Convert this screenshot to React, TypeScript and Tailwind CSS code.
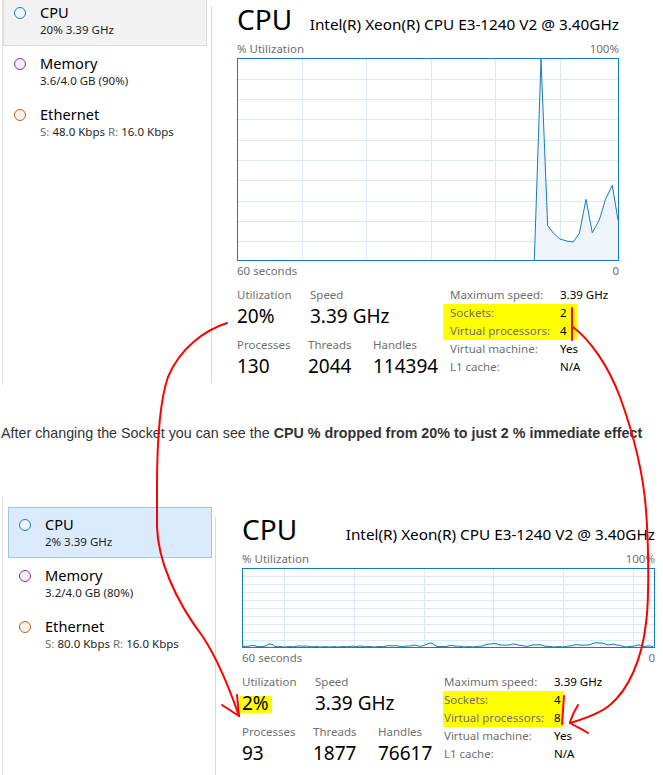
import React from "react";

const SANS = "font-['Noto_Sans',sans-serif]";

type NavProps = { title: string; sub: React.ReactNode; circle: string; boxClass?: string };

function NavItem({ title, sub, circle, boxClass = "" }: NavProps) {
  return (
    <div className={`h-[51px] flex ${boxClass}`}>
      <div className="pl-[11px] pr-[14px] pt-[12px]">
        <div className={`w-[12px] h-[12px] rounded-full border-[1.5px] ${circle}`} />
      </div>
      <div className="pt-[7px]">
        <div className="text-[14.6px] leading-[20px] text-black">{title}</div>
        <div className="text-[11.5px] leading-[16px] text-[#1f1f1f] whitespace-nowrap">{sub}</div>
      </div>
    </div>
  );
}

function Gray({ children }: { children: React.ReactNode }) {
  return <span className="text-[#707070]">{children}</span>;
}

function InfoRow({ label, value }: { label: string; value: string }) {
  return (
    <div className="flex text-[11.5px] leading-[18px] whitespace-nowrap">
      <div className="w-[110px] text-[#707070]">{label}</div>
      <div className="text-black">{value}</div>
    </div>
  );
}

function Stat({ label, value, className = "" }: { label: string; value: React.ReactNode; className?: string }) {
  return (
    <div className={className}>
      <div className="text-[11.5px] leading-[16px] text-[#707070]">{label}</div>
      <div className="text-[19px] leading-[26px] text-black whitespace-nowrap">{value}</div>
    </div>
  );
}

function TopGraph() {
  const W = 382;
  const H = 203;
  const vx = [65, 129, 194, 258, 323];
  const hy = [21, 41, 61, 82, 102, 122, 143, 163, 183];
  const pts: [number, number][] = [
    [297.3, 203], [304, 1], [310.7, 167.7], [316.3, 175], [323, 181], [329.7, 183],
    [336.3, 184], [342.3, 175.3], [349, 141.3], [355.3, 174.7], [362.3, 162],
    [368.7, 140.7], [375.3, 127.3], [381, 162],
  ];
  const line = pts.map((p) => p.join(",")).join(" ");
  const poly = line + ` ${W},${H} 297.3,${H}`;
  return (
    <svg width={W} height={H} className="block">
      <rect x={0} y={0} width={W} height={H} fill="#ffffff" />
      {vx.map((x) => (
        <line key={"v" + x} x1={x + 0.5} y1={0} x2={x + 0.5} y2={H} stroke="#d9eaf4" strokeWidth={1} />
      ))}
      {hy.map((y) => (
        <line key={"h" + y} x1={0} y1={y + 0.5} x2={W} y2={y + 0.5} stroke="#d9eaf4" strokeWidth={1} />
      ))}
      <polygon points={poly} fill="#eef4f9" />
      <polyline points={line} fill="none" stroke="#1a7cbd" strokeWidth={1} />
      <rect x={0.5} y={0.5} width={W - 1} height={H - 1} fill="none" stroke="#117dbb" strokeWidth={1} />
    </svg>
  );
}

function BottomGraph() {
  const W = 413;
  const H = 80;
  const vx = [42, 112, 182, 251, 321, 391];
  const hy = [8, 16, 24, 32, 40, 48, 56, 64, 72];
  const bumps: [number, number, number][] = [
    [10, 1.2, 6], [28, 3, 4], [60, 0.8, 8], [115, 0.6, 10], [150, 1.2, 8], [172, 1.5, 7],
    [188, 4, 5], [210, 1.2, 7], [251, 3.2, 10], [272, 2.6, 8], [295, 2.2, 8],
    [335, 2, 8], [356, 4.2, 10], [373, 2.2, 6], [396, 1.8, 5], [408, 0.8, 4],
  ];
  const pts: string[] = [];
  for (let x = 0; x <= W; x += 3) {
    let y = 78.8;
    for (const [c, h, w] of bumps) {
      y -= h * Math.exp(-(((x - c) / w) ** 2));
    }
    y -= 0.3 * Math.sin(x * 0.7);
    pts.push(`${x},${y.toFixed(2)}`);
  }
  const line = pts.join(" ");
  const poly = `0,${H} ` + line + ` ${W},${H}`;
  return (
    <svg width={W} height={H} className="block">
      <rect x={0} y={0} width={W} height={H} fill="#ffffff" />
      {vx.map((x) => (
        <line key={"v" + x} x1={x + 0.5} y1={0} x2={x + 0.5} y2={H} stroke="#d9eaf4" strokeWidth={1} />
      ))}
      {hy.map((y) => (
        <line key={"h" + y} x1={0} y1={y + 0.5} x2={W} y2={y + 0.5} stroke="#d9eaf4" strokeWidth={1} />
      ))}
      <polygon points={poly} fill="#eef4f9" />
      <polyline points={line} fill="none" stroke="#1a7cbd" strokeWidth={1} />
      <rect x={0.5} y={0.5} width={W - 1} height={H - 1} fill="none" stroke="#117dbb" strokeWidth={1} />
    </svg>
  );
}

type PanelProps = {
  widthClass: string;
  padClass: string;
  leftGroupClass: string;
  hlClass: string;
  graph: React.ReactNode;
  util: React.ReactNode;
  procs: string;
  threads: string;
  handles: string;
  sockets: string;
  vps: string;
};

function MainPanel(p: PanelProps) {
  return (
    <div className={`${p.widthClass} ${p.padClass}`}>
      <div className="flex justify-between items-baseline">
        <div className="text-[28px] leading-[34px] text-black">CPU</div>
        <div className="text-[15.3px] leading-[20px] text-black whitespace-nowrap">
          Intel(R) Xeon(R) CPU E3-1240 V2 @ 3.40GHz
        </div>
      </div>
      <div className="mt-[5px] flex justify-between text-[11.5px] leading-[16px] text-[#707070]">
        <span>% Utilization</span>
        <span>100%</span>
      </div>
      <div className="mt-[1px]">{p.graph}</div>
      <div className="mt-[2px] flex justify-between text-[11.5px] leading-[16px] text-[#707070]">
        <span>60 seconds</span>
        <span>0</span>
      </div>
      <div className="mt-[8px] flex">
        <div className={p.leftGroupClass}>
          <div className="flex">
            <Stat className="w-[73px]" label="Utilization" value={p.util} />
            <Stat label="Speed" value="3.39 GHz" />
          </div>
          <div className="flex mt-[8px]">
            <Stat className="w-[71px]" label="Processes" value={p.procs} />
            <Stat className="w-[65px]" label="Threads" value={p.threads} />
            <Stat label="Handles" value={p.handles} />
          </div>
        </div>
        <div className="-mt-[1px]">
          <InfoRow label="Maximum speed:" value="3.39 GHz" />
          <div className={p.hlClass}>
            <InfoRow label="Sockets:" value={p.sockets} />
            <InfoRow label="Virtual processors:" value={p.vps} />
          </div>
          <InfoRow label="Virtual machine:" value="Yes" />
          <InfoRow label="L1 cache:" value="N/A" />
        </div>
      </div>
    </div>
  );
}

function Annotations() {
  return (
    <svg
      width={663}
      height={775}
      className="absolute left-0 top-0 pointer-events-none"
      fill="none"
      stroke="#ff0000"
      strokeWidth={2}
      strokeLinecap="round"
      strokeLinejoin="round"
    >
      <path d="M227,323 C205,330 180,348 168,377 C160,400 157,440 157,487 L157,527 C158,560 175,600 203,637 C218,660 230,690 239,716" />
      <path d="M222,705 L239,716" />
      <path d="M237,695 L239,716" />
      <path d="M573,327 C590,340 608,365 620,397 C632,430 643,470 646,510 C649,550 649,600 646,623 C642,660 628,690 610,705 C598,715 580,720 570,723" />
      <path d="M578,705 C574,711 572,716 570,722" />
      <path d="M570,723 C577,727 583,730 588,733" />
      <path d="M572,308 L572,340" />
      <path d="M564,696 L562,724" />
    </svg>
  );
}

export default function App() {
  return (
    <div className={`relative w-[663px] h-[775px] overflow-hidden bg-white ${SANS}`}>
      {/* top screenshot */}
      <div className="flex h-[385px]">
        <div className="ml-[2px] w-[209px] border-l border-[#e3e3e3] pr-[4px]">
          <div className="-mt-[5px]">
            <NavItem
              title="CPU"
              sub="20% 3.39 GHz"
              circle="border-[#1e7fc0] bg-[#eef5fb]"
              boxClass="bg-[#f2f2f2] shadow-[inset_0_0_0_1px_#dcdcdc]"
            />
            <NavItem title="Memory" sub="3.6/4.0 GB (90%)" circle="border-[#9528b4] bg-[#f8eefb]" />
            <NavItem
              title="Ethernet"
              sub={
                <>
                  <Gray>S:</Gray> 48.0 Kbps <Gray>R:</Gray> 16.0 Kbps
                </>
              }
              circle="border-[#b0621d] bg-[#fbf1e8]"
            />
          </div>
        </div>
        <div className="mt-[6px] mb-[2px] w-px bg-[#d9d9d9]" />
        <div className="ml-[25px]">
          <MainPanel
            widthClass="w-[382px]"
            padClass="pt-[2px]"
            leftGroupClass="w-[213px]"
            hlClass="-ml-[7px] pl-[7px] w-[134px] bg-[#ffff00]"
            graph={<TopGraph />}
            util="20%"
            procs="130"
            threads="2044"
            handles="114394"
            sockets="2"
            vps="4"
          />
        </div>
      </div>

      {/* caption */}
      <div className="h-[112px] pt-[38px]">
        <p className="ml-[1px] font-['Liberation_Sans',Arial,sans-serif] text-[14.3px] leading-[20px] text-[#333333] whitespace-nowrap">
          After changing the Socket you can see the{" "}
          <b className="font-bold">CPU % dropped from 20% to just 2 % immediate effect</b>
        </p>
      </div>

      {/* bottom screenshot */}
      <div className="flex h-[278px]">
        <div className="ml-[2px] w-[213px] border-l border-[#e3e3e3] pl-[5px] pr-[3px] pt-[10px]">
          <NavItem
            title="CPU"
            sub="2% 3.39 GHz"
            circle="border-[#1e7fc0] bg-[#eef5fb]"
            boxClass="bg-[#dbeafc] shadow-[inset_0_0_0_1px_#9fc6ea]"
          />
          <NavItem title="Memory" sub="3.2/4.0 GB (80%)" circle="border-[#9528b4] bg-[#f8eefb]" />
          <NavItem
            title="Ethernet"
            sub={
              <>
                <Gray>S:</Gray> 80.0 Kbps <Gray>R:</Gray> 16.0 Kbps
              </>
            }
            circle="border-[#b0621d] bg-[#fbf1e8]"
          />
        </div>
        <div className="mt-[20px] w-px bg-[#d9d9d9]" />
        <div className="ml-[26px]">
          <MainPanel
            widthClass="w-[413px]"
            padClass="pt-[15px]"
            leftGroupClass="w-[202px]"
            hlClass="-ml-[1px] pl-[1px] w-[121px] bg-[#ffff00]"
            graph={<BottomGraph />}
            util={
              <span className="relative inline-block">
                <span className="absolute -left-[2px] -right-[3px] top-[6px] h-[17px] bg-[#ffff00]" />
                <span className="relative">2%</span>
              </span>
            }
            procs="93"
            threads="1877"
            handles="76617"
            sockets="4"
            vps="8"
          />
        </div>
      </div>

      <Annotations />
    </div>
  );
}
